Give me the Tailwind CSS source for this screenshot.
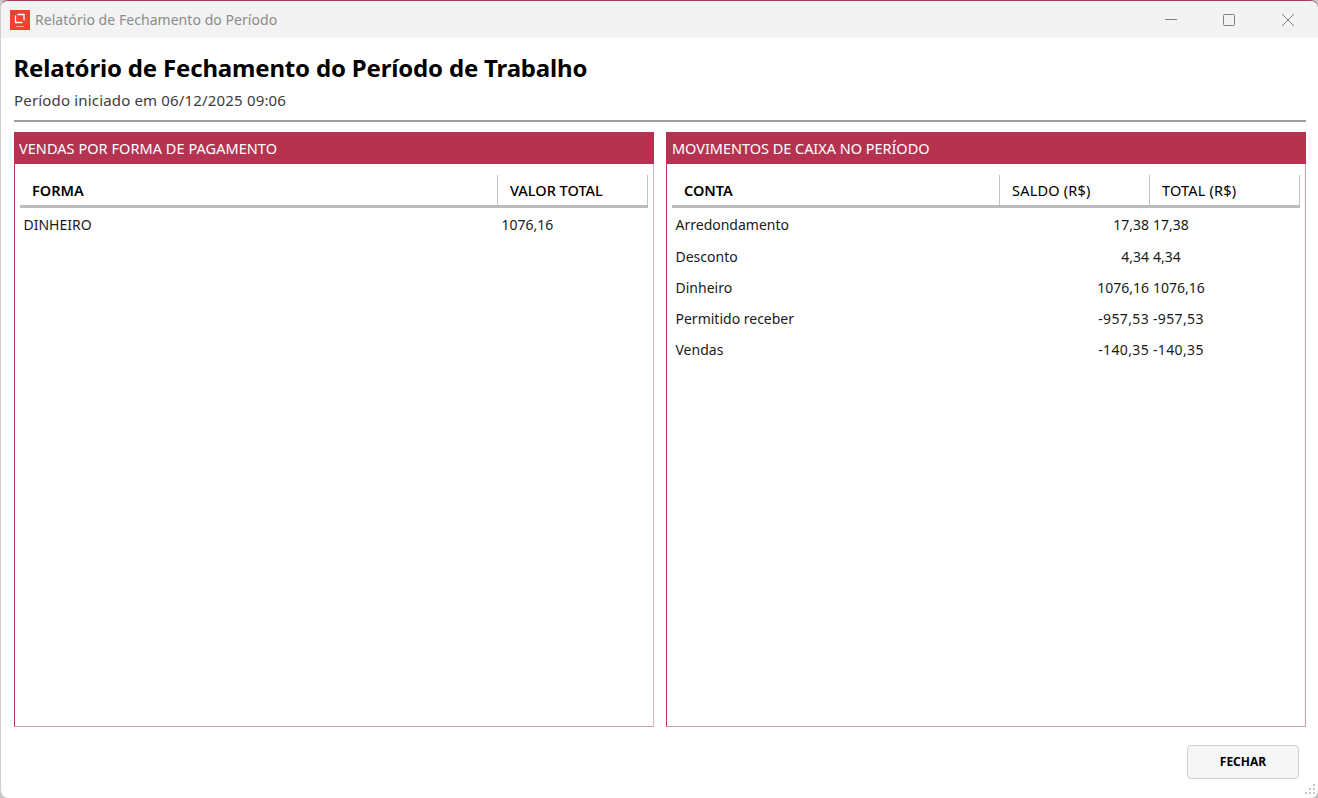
<!DOCTYPE html>
<html lang="pt-BR">
<head>
<meta charset="utf-8">
<title>Relatório de Fechamento do Período</title>
<script src="https://cdn.jsdelivr.net/npm/@tailwindcss/browser@4"></script>
</head>
<body class="w-[1318px] h-[798px] overflow-hidden bg-[#c9c6c8] font-['Noto_Sans','Open_Sans',sans-serif] text-black">
<div class="relative w-[1318px] h-[798px] flex flex-col bg-white rounded-[8px] overflow-hidden border-t border-t-[#a83c58] border-l border-l-[#d0ced0]">
  <div class="h-[37px] shrink-0 bg-[#f3f3f3] flex items-center">
    <div class="w-[20px] h-[20px] ml-[9px] bg-[#f0402f] flex items-center justify-center shrink-0">
      <svg width="20" height="20" viewBox="0 0 20 20" fill="none"><path d="M5.5 5.5V12.5H12.5M7.5 4.5H14V10.5" stroke="#fff" stroke-width="1.3"/><path d="M6.5 16.5H14" stroke="#fbd0c8" stroke-width="1" stroke-dasharray="1.4 .6"/></svg>
    </div>
    <span class="ml-[5px] text-[14px] text-[#8c8c8c] tracking-[0.05px]">Relatório de Fechamento do Período</span>
    <div class="ml-auto flex items-center">
      <button class="w-[58px] h-[37px] flex items-center justify-center"><svg width="14" height="14" viewBox="0 0 14 14"><path d="M1 6.5H13" stroke="#808080" stroke-width="1"/></svg></button>
      <button class="w-[58px] h-[37px] flex items-center justify-center"><svg width="14" height="14" viewBox="0 0 14 14" fill="none"><rect x="1.5" y="1.5" width="11" height="11" rx="1" stroke="#808080" stroke-width="1"/></svg></button>
      <button class="w-[60px] h-[37px] flex items-center justify-center"><svg width="14" height="14" viewBox="0 0 14 14" fill="none"><path d="M1 1L13 13M13 1L1 13" stroke="#808080" stroke-width="1"/></svg></button>
    </div>
  </div>

  <div class="flex-1 flex flex-col pl-[13px] pr-[12px] min-h-0">
    <h1 class="mt-[13px] -ml-[0.5px] text-[24px] leading-[34px] font-bold tracking-[-0.18px]">Relatório de Fechamento do Período de Trabalho</h1>
    <p class="mt-[5px] text-[15px] leading-[20px] text-[#3c3c3c] tracking-[0.17px]">Período iniciado em 06/12/2025 09:06</p>
    <div class="mt-[10px] h-[2px] bg-[#a0a0a0]"></div>

    <div class="mt-[10px] flex gap-[12px] h-[595px]">
      <section class="w-[640px] flex flex-col border border-t-0 border-r-[#d6b4c0] border-b-[#cc9fae] border-l-[#b23a58]">
        <h2 class="-ml-px -mr-px h-[32px] shrink-0 bg-[#b53351] text-white text-[14.5px] leading-[32px] pl-[5px] font-normal tracking-[0.05px]">VENDAS POR FORMA DE PAGAMENTO</h2>
        <div class="mx-[5px] mt-[11px] flex h-[33px] border-b-[3px] border-[#bcbcbc] text-[14.5px] leading-[30px]">
          <div class="w-[478px] pl-[12px] font-semibold border-r border-[#c4c4c4]">FORMA</div>
          <div class="w-[150px] pl-[12px] font-medium border-r border-[#c4c4c4]">VALOR TOTAL</div>
        </div>
        <div class="mx-[5px] flex text-[14px] h-[31px] mt-[1px] leading-[31px] text-[#1a1a1a]">
          <div class="w-[481.5px] pl-[3.5px]">DINHEIRO</div>
          <div>1076,16</div>
        </div>
      </section>

      <section class="w-[640px] flex flex-col border border-t-0 border-r-[#cf9fb0] border-b-[#cc9fae] border-l-[#b23a58]">
        <h2 class="-ml-px -mr-px h-[32px] shrink-0 bg-[#b53351] text-white text-[14.5px] leading-[32px] pl-[6px] font-normal tracking-[-0.03px]">MOVIMENTOS DE CAIXA NO PERÍODO</h2>
        <div class="mx-[5px] mt-[11px] flex h-[33px] border-b-[3px] border-[#bcbcbc] text-[14.5px] leading-[30px]">
          <div class="w-[328px] pl-[12px] font-semibold border-r border-[#c4c4c4]">CONTA</div>
          <div class="w-[150px] pl-[12px] border-r border-[#c4c4c4] tracking-[0.2px]">SALDO (R$)</div>
          <div class="w-[150px] pl-[12px] border-r border-[#c4c4c4] tracking-[0.2px]">TOTAL (R$)</div>
        </div>
        <div class="mx-[5px] mt-[1px] flex flex-col text-[14px] leading-[31px] text-[#1a1a1a]">
          <div class="flex h-[32px]"><div class="w-[328px] pl-[3.5px]">Arredondamento</div><div class="w-[149px] text-right">17,38</div><div class="pl-[4px]">17,38</div></div>
          <div class="flex h-[31px]"><div class="w-[328px] pl-[3.5px]">Desconto</div><div class="w-[149px] text-right">4,34</div><div class="pl-[4px]">4,34</div></div>
          <div class="flex h-[31px]"><div class="w-[328px] pl-[3.5px]">Dinheiro</div><div class="w-[149px] text-right">1076,16</div><div class="pl-[4px]">1076,16</div></div>
          <div class="flex h-[31px]"><div class="w-[328px] pl-[3.5px]">Permitido receber</div><div class="w-[149px] text-right tracking-[0.35px]">-957,53</div><div class="pl-[4px] tracking-[0.35px]">-957,53</div></div>
          <div class="flex h-[31px]"><div class="w-[328px] pl-[3.5px]">Vendas</div><div class="w-[149px] text-right tracking-[0.35px]">-140,35</div><div class="pl-[4px] tracking-[0.35px]">-140,35</div></div>
        </div>
      </section>
    </div>

    <div class="flex justify-end mt-[18px] pr-[7px]">
      <button class="w-[112px] h-[34px] rounded-[4px] border border-[#d0d0d0] bg-[#f6f6f6] text-[12px] font-bold text-black">FECHAR</button>
    </div>
  </div>

  <svg class="absolute right-[1px] bottom-[1px]" width="14" height="14" viewBox="0 0 14 14" fill="#c4c4c4">
    <rect x="10" y="1" width="2" height="2"/><rect x="10" y="5" width="2" height="2"/><rect x="10" y="9" width="2" height="2"/><rect x="6" y="5" width="2" height="2"/><rect x="6" y="9" width="2" height="2"/><rect x="2" y="9" width="2" height="2"/>
  </svg>
</div>
</body>
</html>
